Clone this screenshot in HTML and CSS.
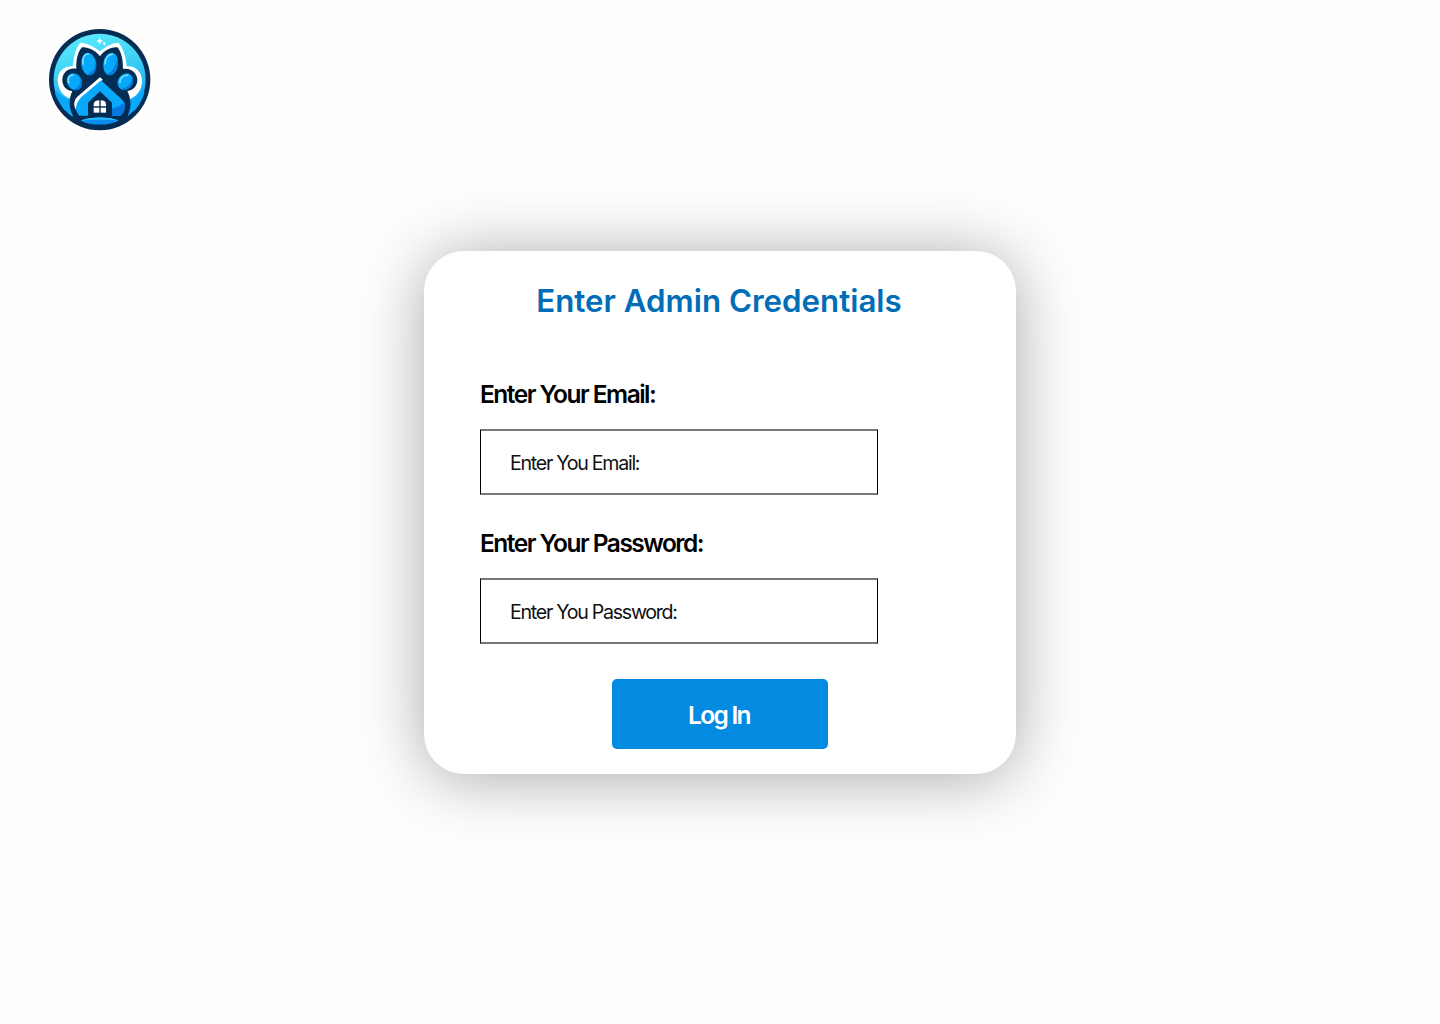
FILE: index.html
```html
<!DOCTYPE html>
<html lang="en">
<head>
<meta charset="utf-8">
<title>Admin Log In</title>
<link rel="stylesheet" href="styles.css">
</head>
<body>
<header class="header">
  <svg class="logo" viewBox="0 0 360 360" role="img" aria-label="Paw and house logo">
    <defs>
      <linearGradient id="sky" x1="0" y1="0" x2="0.25" y2="1">
        <stop offset="0" stop-color="#5ff0ff"/>
        <stop offset="0.45" stop-color="#3fd0f5"/>
        <stop offset="1" stop-color="#0a9cf5"/>
      </linearGradient>
      <clipPath id="disc"><circle cx="179" cy="179" r="140"/></clipPath>
    </defs>
    <circle cx="179" cy="179" r="152" fill="#052c52"/>
    <circle cx="179" cy="179" r="138" fill="url(#sky)"/>
    <g clip-path="url(#disc)">
      <path fill="#fff" d="M180 94C164 80 141 70 121 68C107 83 101 109 98 139C72 137 54 154 53 180C53 207 71 232 91 235L98 270L262 270L272 236C292 228 307 207 306 180C304 153 285 136 260 139C258 109 249 82 235 68C216 69 195 80 180 94Z"/>
      <path fill="#08a8fa" d="M50 212C64 229 80 237 91 238L96 278L72 270L42 222Z"/>
      <path fill="#08a8fa" d="M310 212C296 229 280 237 270 238L265 278L290 270L318 222Z"/>
      <path fill="#052c52" d="M180 109C166 91 144 80 126 82C113 96 108 120 109 146C90 142 68 154 67 178C66 199 80 213 97 213C86 236 86 264 98 285L105 320L256 320L265 281C275 260 273 234 262 213C279 212 293 198 292 178C290 157 271 143 249 147C249 118 244 96 232 82C213 80 193 91 180 109Z"/>
    </g>
    <g fill="#08a8fa">
      <ellipse cx="146" cy="132" rx="22" ry="34" transform="rotate(-6 146 132)"/>
      <ellipse cx="212" cy="132" rx="22" ry="34" transform="rotate(9 212 132)"/>
      <ellipse cx="103" cy="185" rx="22" ry="26" transform="rotate(-28 103 185)"/>
      <ellipse cx="256" cy="185" rx="22" ry="26" transform="rotate(34 256 185)"/>
    </g>
    <g fill="#0877dc">
      <path d="M164 112C171 137 163 156 143 161C160 175 174 148 168 124Z"/>
      <path d="M231 112C230 137 217 158 199 163C216 174 236 145 234 117Z"/>
      <path d="M119 174C123 192 117 204 99 209C116 217 130 200 124 185Z"/>
      <path d="M274 170C277 190 261 205 241 207C261 218 286 193 278 173Z"/>
    </g>
    <g fill="none" stroke="#75dcff" stroke-width="5" stroke-linecap="round">
      <path d="M129 132C125 115 134 102 145 102"/>
      <path d="M195 132C195 114 206 102 217 103"/>
      <path d="M87 188C80 174 90 164 99 165"/>
      <path d="M240 187C239 176 250 164 263 166"/>
    </g>
    <path fill="#08a8fa" d="M180 178L112 239C102 250 105 273 118 287L242 287C255 276 260 252 245 238Z"/>
    <path fill="#0877dc" d="M255 245C237 263 219 264 214 266L214 287L242 287C251 279 258 262 255 245Z"/>
    <path fill="#fff" d="M180 172L112 230C100 242 101 258 108 269C109 252 114 241 127 229L180 184L189 180Z"/>
    <path fill="#052c52" d="M180 214L144 248L144 296L216 296L216 248Z"/>
    <g fill="#fff">
      <path d="M161 259V251Q164 241 178 241V259Z"/>
      <path d="M182 259V241Q196 241 198 251V259Z"/>
      <path d="M161 263H178V278H161Z"/>
      <path d="M182 263H198V278H182Z"/>
      <path d="M179 52L182 60L190 63L182 66L179 74L176 66L168 63L176 60Z"/>
      <path d="M193 65L195 69L199 71L195 73L193 77L191 73L187 71L191 69Z"/>
    </g>
    <path fill="#052c52" d="M96 289H263L246 313H112Z"/>
    <path fill="#0b8eea" d="M122 302C147 290 211 289 236 302C206 317 153 318 122 302Z"/>
    <path fill="#24bdfb" d="M122 302C147 290 211 289 236 302C210 298 148 299 122 302Z"/>
  </svg>
</header>
<main class="main">
  <form class="card">
    <h1 class="title">Enter Admin Credentials</h1>
    <div class="fields">
      <label class="label" for="email">Enter Your Email:</label>
      <input class="input" id="email" type="email" placeholder="Enter You Email:">
      <label class="label" for="password">Enter Your Password:</label>
      <input class="input" id="password" type="password" placeholder="Enter You Password:">
    </div>
    <button class="submit" type="button">Log In</button>
  </form>
</main>
</body>
</html>
```
FILE: styles.css
```css
* {
  box-sizing: border-box;
}

body {
  margin: 0;
  min-height: 1024px;
  background: #fefefe;
  font-family: Inter, "Liberation Sans", sans-serif;
}

.header {
  height: 251px;
  padding: 20px 40px;
}

.logo {
  display: block;
  width: 120px;
  height: 120px;
}

.main {
  display: flex;
  justify-content: center;
}

.card {
  display: flex;
  flex-direction: column;
  align-items: center;
  width: 592px;
  height: 523px;
  padding: 31px 58px 0 56px;
  border-radius: 40px;
  background: #fff;
  box-shadow: 0 4px 66px rgba(0, 0, 0, 0.34);
}

.title {
  margin: 0;
  color: #006db6;
  font-size: 31.25px;
  font-weight: 600;
  line-height: 39px;
  white-space: nowrap;
}

.fields {
  display: flex;
  flex-direction: column;
  align-items: flex-start;
  width: 100%;
  margin-top: 58px;
}

.label {
  margin-bottom: 19px;
  color: #000;
  font-size: 24.5px;
  font-weight: 600;
  letter-spacing: -0.062em;
  line-height: 31px;
}

.input {
  width: 398px;
  height: 66px;
  margin-bottom: 33px;
  padding: 1px 29px 0;
  border: solid #000;
  border-width: 2px 1px;
  border-top-color: #777;
  border-bottom-color: #777;
  border-radius: 0;
  background: #fff;
  font-family: inherit;
  font-size: 19.6px;
  font-weight: 400;
  letter-spacing: -0.065em;
}

.input::placeholder {
  color: #111;
  opacity: 1;
}

.submit {
  width: 216px;
  height: 70px;
  margin-top: 1.5px;
  margin-right: -2px;
  padding: 3px 2px 0 0;
  border: 0;
  border-radius: 5px;
  background: #038ae1;
  color: #fff;
  font-family: inherit;
  font-size: 24.5px;
  font-weight: 600;
  letter-spacing: -0.07em;
}
```
